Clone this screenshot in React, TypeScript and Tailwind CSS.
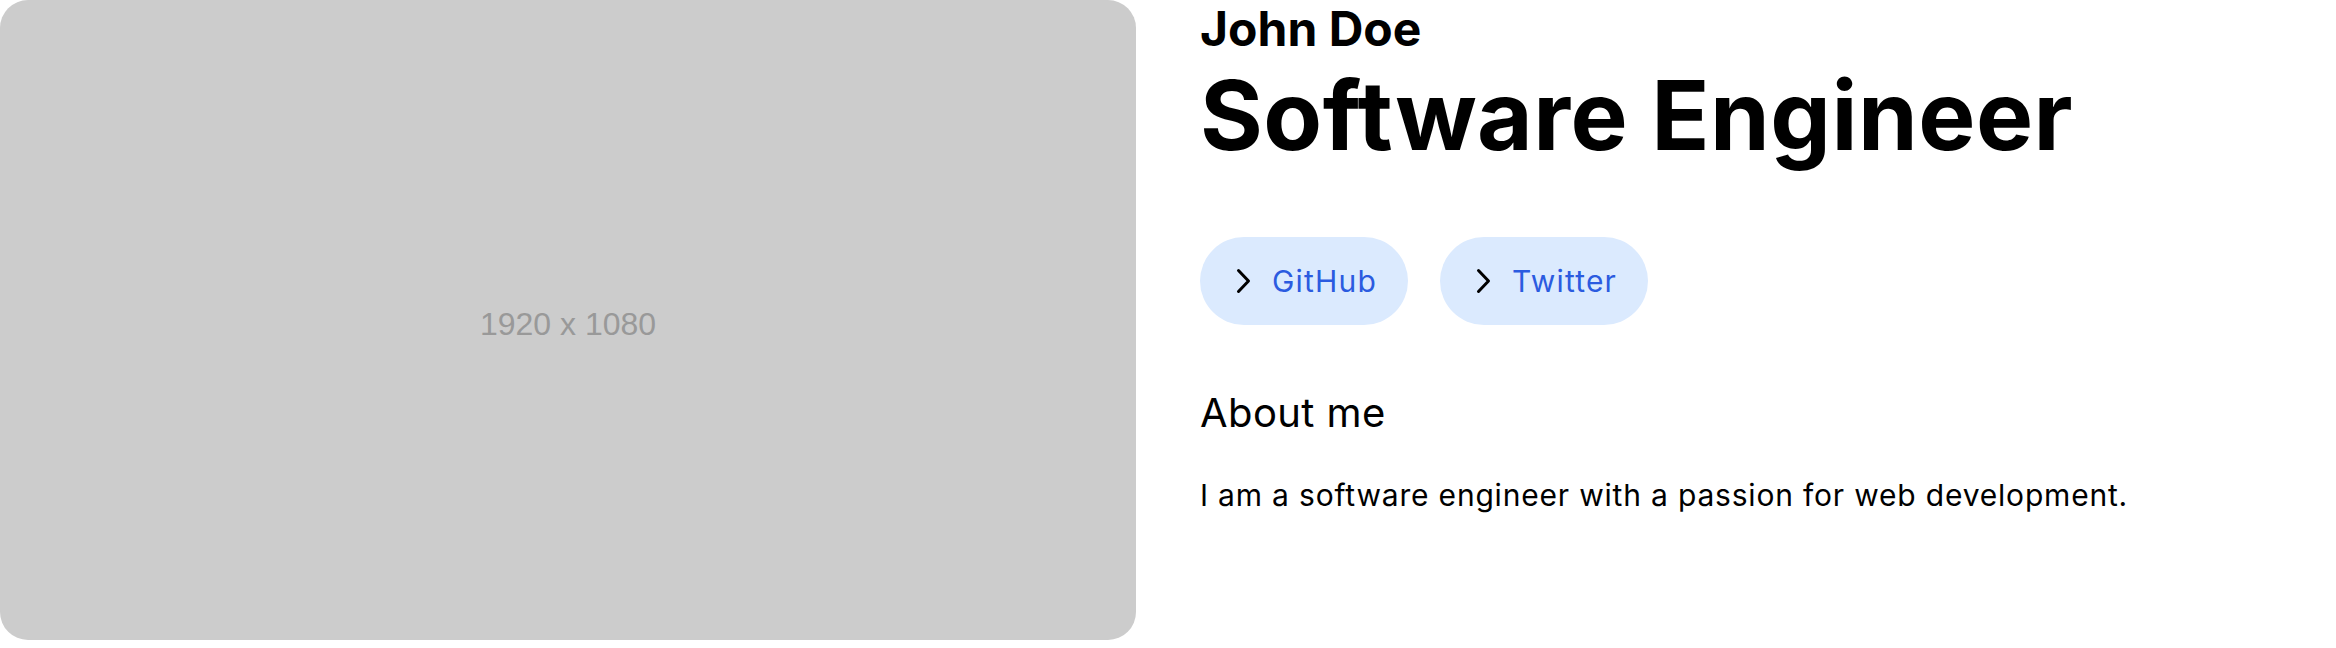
import React from 'react';

interface LinkPill {
  label: string;
  href: string;
}

const links: LinkPill[] = [
  { label: 'GitHub', href: '#github' },
  { label: 'Twitter', href: '#twitter' },
];

const Chevron = () => (
  <svg width="20" height="28" viewBox="0 0 20 28" fill="none" className="shrink-0">
    <polyline points="6.5,3.5 16.5,14 6.5,24.5" stroke="#000" strokeWidth="3" strokeLinecap="round" strokeLinejoin="round" />
  </svg>
);

const App: React.FC = () => {
  return (
    <div className="grid grid-cols-2 gap-16 bg-white font-['Inter',sans-serif]">
      {/* Placeholder cover */}
      <div className="flex aspect-[1136/640] items-center justify-center rounded-[28px] bg-[#cccccc] pt-2">
        <span className="font-['Liberation_Sans',Arial,sans-serif] text-[32px] text-[#999999]">1920 x 1080</span>
      </div>

      {/* Profile */}
      <div className="flex flex-col text-black">
        <h2 className="text-5xl font-bold leading-[1.2]">John Doe</h2>
        <h1 className="text-8xl font-bold leading-[1.2] tracking-[0.005em]">Software Engineer</h1>

        <div className="mt-16 flex gap-8">
          {links.map((link) => (
            <a
              key={link.label}
              href={link.href}
              className="flex h-[88px] w-[208px] items-center gap-5 rounded-full bg-[#dbeafe] px-8"
            >
              <Chevron />
              <span className="text-3xl tracking-[0.04em] text-[#2b5be0]">{link.label}</span>
            </a>
          ))}
        </div>

        <h3 className="mt-16 text-[40px] leading-[1.2] tracking-[0.01em]">About me</h3>
        <p className="mt-10 text-3xl leading-[1.2] tracking-[0.027em]">I am a software engineer with a passion for web development.</p>
      </div>
    </div>
  );
};

export default App;
